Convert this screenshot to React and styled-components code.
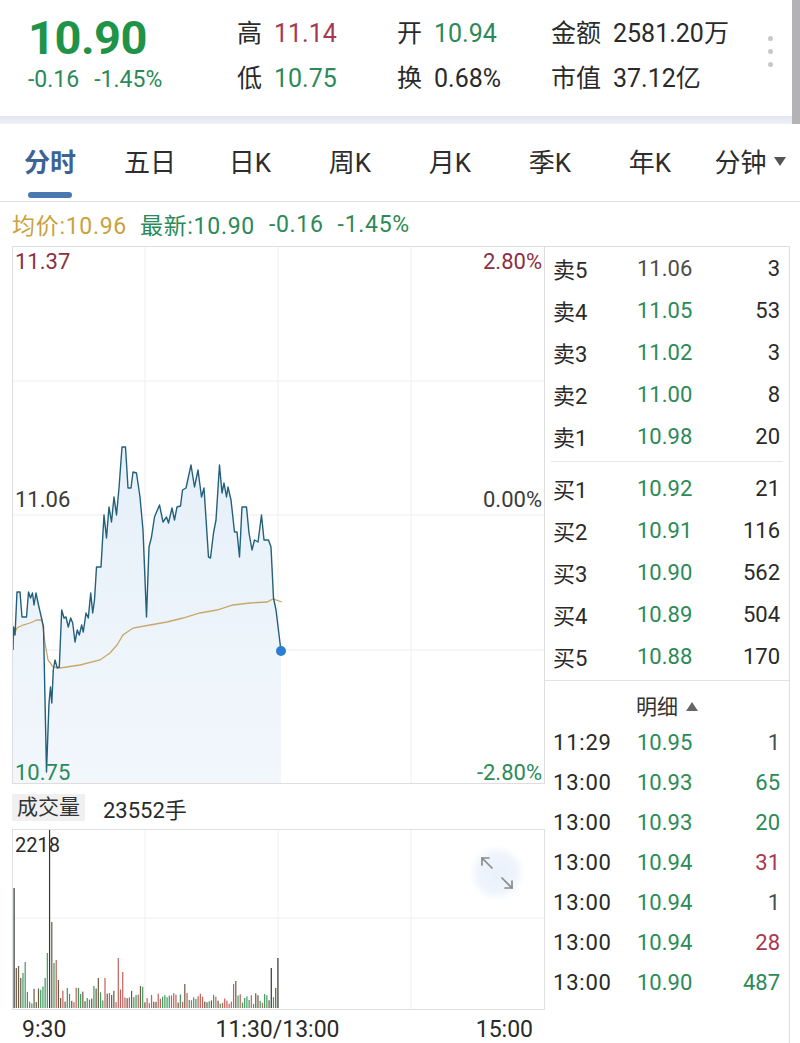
import styled, { createGlobalStyle } from "styled-components";

const GlobalStyle = createGlobalStyle`
  html, body { margin: 0; padding: 0; background: #fff; }
  body {
    font-family: Roboto, "Noto Sans CJK SC", sans-serif;
    color: #2a2a2a;
  }
  * { box-sizing: border-box; }
`;

const GREEN = "#2b8a57";
const RED = "#a8384f";
const DARK = "#2a2a2a";
const GRAY = "#4d4d4d";

const TABS = ["分时", "五日", "日K", "周K", "月K", "季K", "年K", "分钟"];

const SELLS = [
  ["卖5", "11.06", "3", GRAY],
  ["卖4", "11.05", "53", GREEN],
  ["卖3", "11.02", "3", GREEN],
  ["卖2", "11.00", "8", GREEN],
  ["卖1", "10.98", "20", GREEN],
];

const BUYS = [
  ["买1", "10.92", "21"],
  ["买2", "10.91", "116"],
  ["买3", "10.90", "562"],
  ["买4", "10.89", "504"],
  ["买5", "10.88", "170"],
];

const TRADES = [
  ["11:29", "10.95", "1", GRAY],
  ["13:00", "10.93", "65", GREEN],
  ["13:00", "10.93", "20", GREEN],
  ["13:00", "10.94", "31", RED],
  ["13:00", "10.94", "1", GRAY],
  ["13:00", "10.94", "28", RED],
  ["13:00", "10.90", "487", GREEN],
];

// price line, page coordinates
const PRICE = [
  [13, 650], [13.5, 627], [15, 635], [17, 592], [20, 592], [22, 617], [26.5, 617], [28.5, 592],
  [30.5, 598], [32.5, 593], [34, 605], [36, 593], [38.5, 605], [41.5, 618], [43.5, 627], [46.5, 772],
  [49, 703], [50.5, 687], [51.8, 703], [53.3, 670], [55, 660], [57.3, 668], [59.3, 667], [61.7, 610],
  [64, 618], [66, 617], [68.3, 627], [70.7, 618], [72.7, 623], [75, 642], [77.3, 630], [79.3, 635],
  [81.7, 625], [83.3, 632], [86, 613], [88.3, 618], [90.7, 593], [92.7, 613], [94.5, 600], [96.5, 567],
  [101, 567], [104, 515], [106.5, 538], [109, 507], [111.5, 522], [114, 497], [116.5, 515], [119, 488],
  [122, 447], [125.5, 447], [128, 488], [131, 488], [133, 472], [136.5, 473], [140, 497], [143, 530],
  [146.5, 617], [149, 547], [151.5, 537], [154.5, 517], [159.5, 505], [163, 522], [166.5, 517], [168.5, 523],
  [172, 508], [174.5, 520], [177, 507], [180.5, 506], [182.5, 490], [186, 488], [191, 465], [194.5, 487],
  [198, 470], [201.5, 497], [204, 488], [208.5, 557], [210.5, 558], [213.5, 533], [216, 520], [219.5, 465],
  [222, 493], [224, 483], [226.5, 497], [228, 487], [231, 500], [234.5, 532], [237, 532], [239.5, 557],
  [242, 507], [246.5, 507], [249, 533], [252, 550], [254.5, 540], [258, 542], [261.5, 515], [264, 540],
  [268.5, 540], [271, 547], [273.5, 598], [276, 610], [281, 651],
];

const AVG = [
  [13, 637], [17, 628], [23, 625], [30, 623], [37, 620], [42, 620], [45, 643], [48, 660], [53, 667],
  [60, 668], [80, 665], [100, 660], [110, 653], [117, 645], [123, 635], [133, 628], [150, 625],
  [167, 622], [183, 618], [200, 613], [217, 610], [233, 605], [250, 603], [267, 602], [273, 599], [282, 602],
];

const toPath = (pts) => pts.map(([x, y], i) => `${i ? "L" : "M"}${x} ${y}`).join(" ");

const volumeBars = (() => {
  let seed = 23;
  const rnd = () => {
    seed = (seed * 9301 + 49297) % 233280;
    return seed / 233280;
  };
  const spikes = {
    0: 120, 1: 40, 2: 42, 3: 30, 4: 35, 5: 46, 14: 30, 15: 55, 16: 178, 17: 86, 18: 45,
    19: 48, 20: 28, 24: 20, 36: 22, 38: 30, 41: 30, 47: 50, 49: 36, 77: 24, 99: 24,
    100: 27, 116: 40, 118: 20, 119: 50,
  };
  const palette = ["#c4605c", "#3f9a5e", "#6b5a44"];
  return Array.from({ length: 120 }, (_, i) => {
    const r = rnd();
    const h = spikes[i] ?? 4 + rnd() * (i < 60 ? 18 : 12);
    let color = palette[Math.floor(r * 3)];
    if (i === 0 || i === 16 || i === 116 || i === 119) color = "#2f3a30";
    else if (i >= 13 && i <= 15) color = "#3f9a5e";
    else if (i >= 41 && i <= 52) color = r < 0.7 ? "#c4605c" : "#6b5a44";
    return { x: 13.5 + i * 2.217, h, color };
  });
})();

const Page = styled.div`
  width: 800px;
  height: 1043px;
  overflow: hidden;
  background: #fff;
`;

const HeaderWrap = styled.div`
  border-right: 8px solid #b3b3b5;
`;

const Header = styled.div`
  height: 116px;
  display: flex;
  align-items: flex-start;
`;

const PriceBlock = styled.div`
  width: 237px;
  padding: 14px 0 0 28px;
`;

const BigPrice = styled.div`
  font-size: 47px;
  line-height: 47px;
  font-weight: 700;
  color: #1f9348;
  letter-spacing: -0.5px;
`;

const Change = styled.div`
  margin-top: 7px;
  font-size: 23px;
  line-height: 24px;
  color: ${GREEN};
  display: flex;
  gap: 15px;
`;

const StatCol = styled.div`
  width: ${(p) => p.$w}px;
  padding-top: 19px;
  display: flex;
  flex-direction: column;
  gap: 15px;
`;

const Stat = styled.div`
  display: flex;
  gap: 12px;
  font-size: 25px;
  line-height: 30px;
  color: ${DARK};
  white-space: nowrap;
`;

const StatValue = styled.span`
  color: ${(p) => p.$color || DARK};
`;

const Dots = styled.div`
  margin-left: auto;
  margin-right: 19px;
  padding-top: 36px;
  display: flex;
  flex-direction: column;
  gap: 8px;
`;

const Dot = styled.span`
  width: 5px;
  height: 5px;
  border-radius: 50%;
  background: #c8c8c8;
`;

const Band = styled.div`
  height: 8px;
  background: linear-gradient(#e3e6f3, #eff0f6);
`;

const Tabs = styled.div`
  height: 78px;
  display: flex;
  border-bottom: 1px solid #e2e2e2;
`;

const Tab = styled.div`
  flex: 1;
  display: flex;
  flex-direction: column;
  align-items: center;
  padding-top: 26px;
`;

const TabLabel = styled.div`
  font-size: 26px;
  line-height: 26px;
  font-weight: ${(p) => (p.$active ? 700 : 400)};
  color: ${(p) => (p.$active ? "#3c6394" : "#2d2d2d")};
  display: flex;
  align-items: center;
  white-space: nowrap;
`;

const Caret = styled.span`
  margin-left: 7px;
  width: 0;
  height: 0;
  border-left: 6px solid transparent;
  border-right: 6px solid transparent;
  border-top: 9px solid #555;
  transform: translateY(-2px);
`;

const Underline = styled.div`
  width: 44px;
  height: 6px;
  margin-top: 16px;
  border-radius: 3px;
  background: ${(p) => (p.$active ? "#4a78b0" : "transparent")};
`;

const Summary = styled.div`
  height: 44px;
  display: flex;
  align-items: center;
  padding-left: 12px;
  font-size: 23px;
  letter-spacing: 0.7px;
  white-space: nowrap;
`;

const SumPart = styled.span`
  color: ${(p) => p.$color};
  margin-left: ${(p) => p.$gap || 0}px;
`;

const Main = styled.div`
  display: flex;
  padding-left: 12px;
`;

const LeftCol = styled.div`
  width: 533px;
  display: flex;
  flex-direction: column;
`;

const PriceChart = styled.div`
  position: relative;
  height: 538px;
  border: 1px solid #dedede;
`;

const ChartSvg = styled.svg`
  display: block;
  width: 100%;
  height: 100%;
`;

const ChartLabel = styled.div`
  position: absolute;
  top: ${(p) => p.$top}px;
  ${(p) => (p.$right ? "right: 2px;" : "left: 2px;")}
  font-size: ${(p) => p.$size || 22}px;
  line-height: 22px;
  color: ${(p) => p.$color};
`;

const VolHeader = styled.div`
  height: 45px;
  display: flex;
  align-items: center;
  gap: 18px;
  padding-top: 2px;
`;

const VolTag = styled.span`
  height: 27px;
  line-height: 27px;
  padding: 0 5px;
  background: #f0f0f0;
  font-size: 21px;
  color: #333;
`;

const VolValue = styled.span`
  font-size: 22px;
  color: ${DARK};
`;

const VolChart = styled.div`
  position: relative;
  height: 181px;
  border: 1px solid #e0e0e0;
`;

const ExpandButton = styled.div`
  position: absolute;
  left: 456px;
  top: 15px;
  width: 56px;
  height: 56px;
  border-radius: 50%;
  background: radial-gradient(circle, #e9f1fb 0%, #eef4fc 45%, rgba(240, 246, 253, 0) 72%);
  display: flex;
  align-items: center;
  justify-content: center;
`;

const TimeAxis = styled.div`
  height: 33px;
  padding: 7px 12px 0 10px;
  display: grid;
  grid-template-columns: 1fr auto 1fr;
  align-items: center;
  font-size: 23px;
  line-height: 26px;
  color: ${DARK};
`;

const AxisEnd = styled.span`
  justify-self: ${(p) => p.$align};
`;

const RightCol = styled.div`
  width: 245px;
  border-top: 1px solid #dedede;
  border-right: 1px solid #dedede;
  display: flex;
  flex-direction: column;
`;

const BookBlock = styled.div`
  padding: ${(p) => p.$pt}px 0 ${(p) => p.$pb}px;
`;

const Row = styled.div`
  height: ${(p) => p.$h}px;
  display: grid;
  grid-template-columns: 84px 70px 1fr;
  align-items: center;
  padding: 0 9px 0 8px;
  font-size: 22px;
  color: ${DARK};
  white-space: nowrap;
`;

const Time = styled.span`
  letter-spacing: 0.8px;
`;

const Price = styled.span`
  color: ${(p) => p.$color || GREEN};
`;

const Qty = styled.span`
  text-align: right;
  color: ${(p) => p.$color || DARK};
`;

const InnerDivider = styled.div`
  height: 1px;
  margin: 0 6px;
  background: #e8e8e8;
`;

const DetailHead = styled.div`
  border-top: 1px solid #e2e2e2;
  height: 42px;
  padding-top: 15px;
  display: flex;
  justify-content: center;
  align-items: flex-start;
  font-size: 21px;
  line-height: 22px;
  color: #333;
  gap: 8px;
`;

const UpCaret = styled.span`
  margin-top: 6px;
  width: 0;
  height: 0;
  border-left: 6px solid transparent;
  border-right: 6px solid transparent;
  border-bottom: 9px solid #666;
`;

const ExpandIcon = () => (
  <svg width="36" height="36" viewBox="0 0 36 36" fill="none" stroke="#8a8a8a" strokeWidth="1.7" strokeLinecap="round">
    <path d="M3 3 L13 13" />
    <path d="M3 10 L3 3 L10 3" />
    <path d="M23 23 L33 33" />
    <path d="M33 26 L33 33 L26 33" />
  </svg>
);

export default function App() {
  const gridX = [145, 278, 411];
  return (
    <Page>
      <GlobalStyle />
      <HeaderWrap>
        <Header>
          <PriceBlock>
            <BigPrice>10.90</BigPrice>
            <Change>
              <span>-0.16</span>
              <span>-1.45%</span>
            </Change>
          </PriceBlock>
          <StatCol $w={160}>
            <Stat>高<StatValue $color={RED}>11.14</StatValue></Stat>
            <Stat>低<StatValue $color={GREEN}>10.75</StatValue></Stat>
          </StatCol>
          <StatCol $w={154}>
            <Stat>开<StatValue $color={GREEN}>10.94</StatValue></Stat>
            <Stat>换<StatValue>0.68%</StatValue></Stat>
          </StatCol>
          <StatCol $w={190}>
            <Stat>金额<StatValue>2581.20万</StatValue></Stat>
            <Stat>市值<StatValue>37.12亿</StatValue></Stat>
          </StatCol>
          <Dots>
            <Dot />
            <Dot />
            <Dot />
          </Dots>
        </Header>
        <Band />
      </HeaderWrap>

      <Tabs>
        {TABS.map((t, i) => (
          <Tab key={t}>
            <TabLabel $active={i === 0}>
              {t}
              {t === "分钟" && <Caret />}
            </TabLabel>
            <Underline $active={i === 0} />
          </Tab>
        ))}
      </Tabs>

      <Summary>
        <SumPart $color="#c9a23e">均价:10.96</SumPart>
        <SumPart $color={GREEN} $gap={13}>最新:10.90</SumPart>
        <SumPart $color={GREEN} $gap={14}>-0.16</SumPart>
        <SumPart $color={GREEN} $gap={14}>-1.45%</SumPart>
      </Summary>

      <Main>
        <LeftCol>
          <PriceChart>
            <ChartSvg viewBox="13 247 531 536" preserveAspectRatio="none">
              <defs>
                <linearGradient id="fillGrad" x1="0" y1="0" x2="0" y2="1">
                  <stop offset="0" stopColor="#e6f0f9" />
                  <stop offset="1" stopColor="#f2f7fc" />
                </linearGradient>
              </defs>
              {[381, 515, 650].map((y) => (
                <line key={y} x1="13" x2="544" y1={y} y2={y} stroke="#ededed" strokeWidth="1" />
              ))}
              {gridX.map((x) => (
                <line key={x} x1={x} x2={x} y1="247" y2="783" stroke="#efefef" strokeWidth="1" />
              ))}
              <path d={`${toPath(PRICE)} L281 783 L13 783 Z`} fill="url(#fillGrad)" />
              <path d={toPath(AVG)} fill="none" stroke="#c9a76a" strokeWidth="1.3" />
              <path d={toPath(PRICE)} fill="none" stroke="#22607c" strokeWidth="1.4" strokeLinejoin="round" />
              <circle cx="281" cy="651" r="5" fill="#2b7fd2" />
            </ChartSvg>
            <ChartLabel $top={4} $color="#8b2f40">11.37</ChartLabel>
            <ChartLabel $top={4} $right $color="#8b2f40">2.80%</ChartLabel>
            <ChartLabel $top={242} $color="#3a3a3a">11.06</ChartLabel>
            <ChartLabel $top={242} $right $color="#3a3a3a">0.00%</ChartLabel>
            <ChartLabel $top={515} $color={GREEN}>10.75</ChartLabel>
            <ChartLabel $top={515} $right $color={GREEN}>-2.80%</ChartLabel>
          </PriceChart>

          <VolHeader>
            <VolTag>成交量</VolTag>
            <VolValue>23552手</VolValue>
          </VolHeader>

          <VolChart>
            <ChartSvg viewBox="13 830 531 179" preserveAspectRatio="none">
              <line x1="13" x2="544" y1="918" y2="918" stroke="#efefef" strokeWidth="1" />
              {gridX.map((x) => (
                <line key={x} x1={x} x2={x} y1="830" y2="1009" stroke="#f0f0f0" strokeWidth="1" />
              ))}
              {volumeBars.map((b, i) => (
                <rect key={i} x={b.x} y={1008 - b.h} width="1.2" height={b.h} fill={b.color} />
              ))}
            </ChartSvg>
            <ChartLabel $top={4} $size={20} $color={DARK}>2218</ChartLabel>
            <ExpandButton>
              <ExpandIcon />
            </ExpandButton>
          </VolChart>

          <TimeAxis>
            <AxisEnd $align="start">9:30</AxisEnd>
            <span>11:30/13:00</span>
            <AxisEnd $align="end">15:00</AxisEnd>
          </TimeAxis>
        </LeftCol>

        <RightCol>
          <BookBlock $pt={0} $pb={4}>
            {SELLS.map(([label, price, qty, color]) => (
              <Row key={label} $h={42}>
                <span>{label}</span>
                <Price $color={color}>{price}</Price>
                <Qty>{qty}</Qty>
              </Row>
            ))}
          </BookBlock>
          <InnerDivider />
          <BookBlock $pt={5} $pb={3}>
            {BUYS.map(([label, price, qty]) => (
              <Row key={label} $h={42}>
                <span>{label}</span>
                <Price>{price}</Price>
                <Qty>{qty}</Qty>
              </Row>
            ))}
          </BookBlock>
          <DetailHead>
            明细
            <UpCaret />
          </DetailHead>
          {TRADES.map(([time, price, qty, color], i) => (
            <Row key={i} $h={40}>
              <Time>{time}</Time>
              <Price>{price}</Price>
              <Qty $color={color}>{qty}</Qty>
            </Row>
          ))}
        </RightCol>
      </Main>
    </Page>
  );
}
